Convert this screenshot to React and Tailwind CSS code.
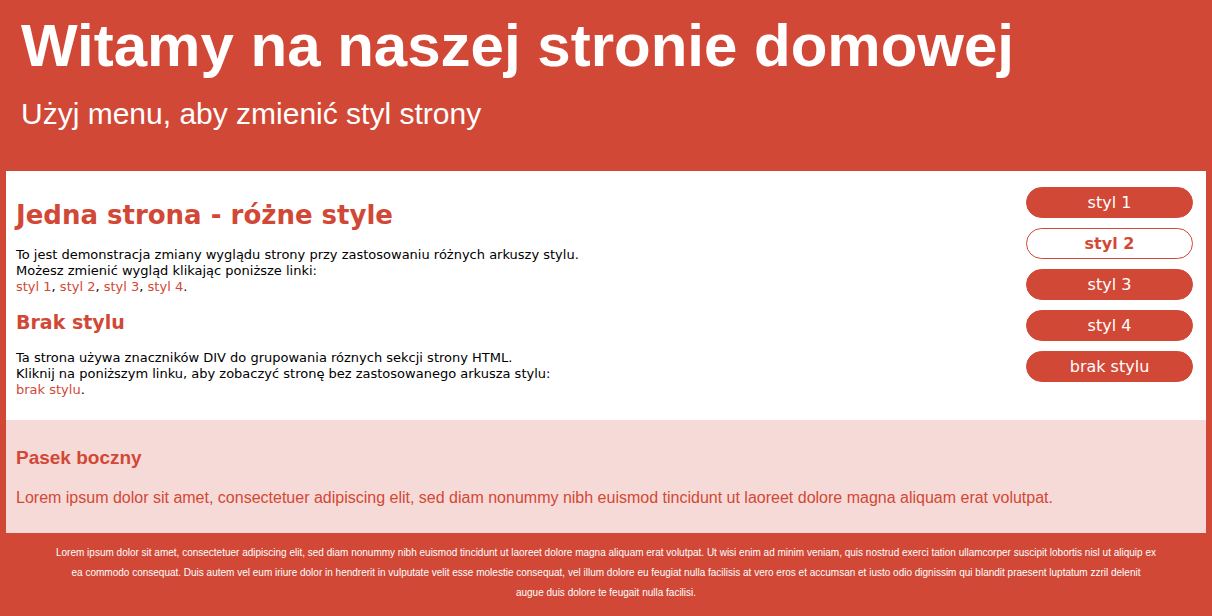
const linkClass = "text-[#d24836]";
const items = ["styl 1", "styl 2", "styl 3", "styl 4", "brak stylu"];

function Menu() {
  return (
    <nav aria-label="Menu" className="mx-[13px] my-4 w-[167px] shrink-0">
      <ul className="flex flex-col gap-2.5">
        {items.map((item) => (
          <li key={item}>
            <a
              href="#"
              aria-current={item === "styl 2" ? "page" : undefined}
              className={
                item === "styl 2"
                  ? "block rounded-full border border-[#d24836] bg-white text-center text-base leading-[29px] font-bold text-[#d24836]"
                  : "block rounded-full border border-[#d24836] bg-[#d24836] text-center text-base leading-[29px] text-white"
              }
            >
              {item}
            </a>
          </li>
        ))}
      </ul>
    </nav>
  );
}

export default function App() {
  return (
    <div className="min-h-screen bg-[#d24836] px-1.5 font-['DejaVu_Sans',Verdana,sans-serif]">
      <header className="px-[15px] pt-3 pb-[38px] font-['Liberation_Sans',Arial,sans-serif] text-white">
        <h1 className="text-[60px] leading-[68px] font-bold">Witamy na naszej stronie domowej</h1>
        <p className="mt-[15px] text-[30px] leading-[38px]">Użyj menu, aby zmienić styl strony</p>
      </header>
      <main className="flex items-start justify-between bg-white">
        <div className="px-2.5 pt-7 pb-[22px] text-[13px] leading-4 text-black">
          <h2 className="text-[26px] leading-8 font-bold text-[#d24836]">Jedna strona - różne style</h2>
          <p className="mt-4">
            To jest demonstracja zmiany wyglądu strony przy zastosowaniu różnych arkuszy stylu.
            <br />
            Możesz zmienić wygląd klikając poniższe linki:
            <br />
            <a href="#" className={linkClass}>styl 1</a>, <a href="#" className={linkClass}>styl 2</a>,{" "}
            <a href="#" className={linkClass}>styl 3</a>, <a href="#" className={linkClass}>styl 4</a>.
          </p>
          <h3 className="mt-4 text-[19px] leading-[23px] font-bold text-[#d24836]">Brak stylu</h3>
          <p className="mt-4">
            Ta strona używa znaczników DIV do grupowania róznych sekcji strony HTML.
            <br />
            Kliknij na poniższym linku, aby zobaczyć stronę bez zastosowanego arkusza stylu:
            <br />
            <a href="#" className={linkClass}>brak stylu</a>.
          </p>
        </div>
        <Menu />
      </main>
      <aside className="bg-[#f6dad7] px-2.5 pt-7 pb-[25px] font-['Liberation_Sans',Arial,sans-serif] text-[#d24836]">
        <h3 className="text-[19px] leading-5 font-bold">Pasek boczny</h3>
        <p className="mt-5 text-base leading-5">
          Lorem ipsum dolor sit amet, consectetuer adipiscing elit, sed diam nonummy nibh euismod tincidunt ut laoreet dolore magna aliquam erat volutpat.
        </p>
      </aside>
      <footer className="px-2.5 py-2.5 text-center font-['Liberation_Sans',Arial,sans-serif] text-[10px] leading-5 text-white">
        Lorem ipsum dolor sit amet, consectetuer adipiscing elit, sed diam nonummy nibh euismod tincidunt ut laoreet dolore magna aliquam erat volutpat. Ut wisi enim ad minim veniam, quis nostrud exerci tation ullamcorper suscipit lobortis nisl ut aliquip ex
        <br />
        ea commodo consequat. Duis autem vel eum iriure dolor in hendrerit in vulputate velit esse molestie consequat, vel illum dolore eu feugiat nulla facilisis at vero eros et accumsan et iusto odio dignissim qui blandit praesent luptatum zzril delenit
        <br />
        augue duis dolore te feugait nulla facilisi.
      </footer>
    </div>
  );
}
